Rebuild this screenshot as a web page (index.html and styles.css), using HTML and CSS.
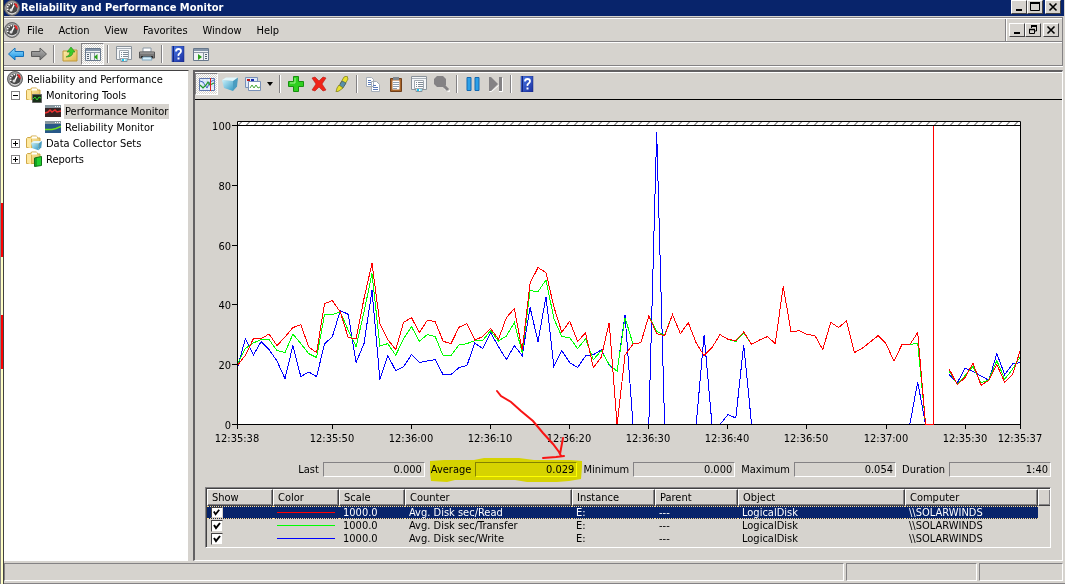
FILE: index.html
```
<!DOCTYPE html>
<html lang="en">
<head>
    <meta charset="UTF-8">
    <meta name="viewport" content="width=device-width, initial-scale=1.0">
    <title>Reliability and Performance Monitor</title>
    <link rel="stylesheet" href="styles.css">
    <script src="chart.js" defer></script>
</head>
<body>
    <!-- shared icons -->
    <svg class="defs" aria-hidden="true">
        <defs>
            <linearGradient id="gBlue" x1="0" y1="0" x2="1" y2="1"><stop offset="0" stop-color="#4a7be8"/><stop offset="1" stop-color="#1c2fa0"/></linearGradient>
            <linearGradient id="gArrow" x1="0" y1="0" x2="0" y2="1"><stop offset="0" stop-color="#9be0ff"/><stop offset="1" stop-color="#0c8be0"/></linearGradient>
            <linearGradient id="gGray" x1="0" y1="0" x2="0" y2="1"><stop offset="0" stop-color="#b4b4b4"/><stop offset="1" stop-color="#707070"/></linearGradient>
            <linearGradient id="gFolder" x1="0" y1="0" x2="1" y2="1"><stop offset="0" stop-color="#fff0b0"/><stop offset="1" stop-color="#e0b850"/></linearGradient>
            <linearGradient id="gCube" x1="0" y1="0" x2="1" y2="1"><stop offset="0" stop-color="#c8f0fa"/><stop offset="1" stop-color="#3a9cc4"/></linearGradient>
            <pattern id="hatch" x="237" y="121" width="8" height="4" patternUnits="userSpaceOnUse"><path d="M1 4.5L6 -.5" stroke="#404040"/></pattern>
        </defs>
        <symbol id="gauge" viewBox="0 0 16 16">
            <circle cx="8" cy="8" r="7.5" fill="#8c8c8c" stroke="#666"/>
            <circle cx="8" cy="8" r="6" fill="#484848" stroke="#c4c4c4" stroke-width=".8"/>
            <path d="M4 10a4.500 4.500 0 0 1 6-6" fill="none" stroke="#fff" stroke-width="1.500" stroke-dasharray="1.500 1"/>
            <path d="M10 3l3 1 1 4-2-1z" fill="#f02020"/>
            <path d="M7 11L10 5" stroke="#fff" stroke-width="1.500"/>
            <circle cx="7" cy="10" r="1.500" fill="#ddd"/>
            <path d="M4 12.500q4 3 8 0" fill="none" stroke="#ddd"/>
        </symbol>
        <symbol id="help" viewBox="0 0 16 16">
            <path d="M2 0h12v16H2z" fill="url(#gBlue)" stroke="#182878" stroke-width=".5"/>
            <path d="M3.500 0v16" stroke="#16257c"/>
            <path d="M6 5.500Q6 3 8.500 3T11 5.300Q11 6.500 9.500 7.500T8.500 10" fill="none" stroke="#fff" stroke-width="1.800"/>
            <path d="M7.500 11.500h2v2h-2z" fill="#fff"/>
        </symbol>
        <symbol id="props" viewBox="0 0 16 16">
            <path d="M.5.5h15v13H11v2H5v-2H.5z" fill="#f4f6f8" stroke="#8a929a"/>
            <path d="M1 2.500h14" stroke="#a8b0b8"/>
            <path d="M3.500 4.500h9v8h-9z" fill="#fff" stroke="#a0a8b0"/>
            <path d="M5 6.500h1M5 8.500h1M5 10.500h1M7 6.500h5M7 8.500h5M7 10.500h5" stroke="#7f8a95"/>
            <path d="M6 14h2" stroke="#18c8f0" stroke-width="2"/><path d="M9 14h2" stroke="#50d8f8"/>
        </symbol>
        <symbol id="folder" viewBox="0 0 16 16">
            <path d="M.5 3.500l1-1h3l1-1.500h5l1 2h2.500v9.500H.5z" fill="url(#gFolder)" stroke="#d0a848"/>
            <path d="M6 1.500h5v2H6z" fill="#fff"/>
            <path d="M1 4h4.500v9.500L1 12z" fill="#ffe9a0"/>
            <path d="M5.500 4v9" stroke="#dcb450"/>
        </symbol>
        <symbol id="cube" viewBox="0 0 16 16">
            <path d="M0 4l4-2.500h12L12 5z" fill="#e0f6fc"/>
            <path d="M0 4l11 1v10L2 12z" fill="url(#gCube)"/>
            <path d="M11 5l5-3.500-1 9-4 4.500z" fill="#4a9cc0"/>
        </symbol>
    </svg>

    <div class="backdrop"></div>
    <div class="window">
        <header class="title-bar">
            <svg class="icon"><use href="#gauge"/></svg>
            <h1>Reliability and Performance Monitor</h1>
            <div class="win-buttons">
                <button class="win-button" aria-label="Minimize"><svg viewBox="0 0 12 10"><path d="M3 8h6" stroke="#000" stroke-width="2"/></svg></button>
                <button class="win-button" aria-label="Maximize"><svg viewBox="0 0 12 10"><path d="M1.500 1v7.500h9V1M1 1h10" fill="none" stroke="#000"/><path d="M1 1h10" stroke="#000" stroke-width="2"/></svg></button>
                <button class="win-button close" aria-label="Close"><svg viewBox="0 0 12 10"><path d="M2.500 1.500l7 7M9.500 1.500l-7 7" stroke="#000" stroke-width="1.600"/></svg></button>
            </div>
        </header>

        <div class="bars">
            <nav class="menu-bar">
                <svg class="icon"><use href="#gauge"/></svg>
                <button class="menu">File</button>
                <button class="menu">Action</button>
                <button class="menu">View</button>
                <button class="menu">Favorites</button>
                <button class="menu">Window</button>
                <button class="menu">Help</button>
                <div class="win-buttons child">
                    <button class="win-button" aria-label="Minimize child"><svg viewBox="0 0 12 10"><path d="M3 8h6" stroke="#000" stroke-width="2"/></svg></button>
                    <button class="win-button" aria-label="Restore child"><svg viewBox="0 0 12 10"><path d="M4.500 3V1h5v5H8" fill="none" stroke="#000"/><path d="M4 1h6" stroke="#000" stroke-width="2"/><path d="M2.500 4.500h5v4h-5z" fill="none" stroke="#000"/><path d="M2 4.500h6" stroke="#000" stroke-width="1.500"/></svg></button>
                    <button class="win-button close" aria-label="Close child"><svg viewBox="0 0 12 10"><path d="M2.500 1.500l7 7M9.500 1.500l-7 7" stroke="#000" stroke-width="1.600"/></svg></button>
                </div>
            </nav>
            <div class="toolbar">
                <button class="tool" aria-label="Back"><svg class="icon" viewBox="0 0 16 16"><path d="M.5 8L7 2v3.500h8.500v5H7V14z" fill="url(#gArrow)" stroke="#1470b8"/></svg></button>
                <button class="tool" aria-label="Forward"><svg class="icon" viewBox="0 0 16 16"><path d="M15.500 8L9 2v3.500H.5v5H9V14z" fill="url(#gGray)" stroke="#5c5c5c"/></svg></button>
                <span class="sep"></span>
                <button class="tool" aria-label="Up one level"><svg class="icon" viewBox="0 0 16 16"><path d="M1 5h6l1-1h7v11H1z" fill="url(#gFolder)" stroke="#c09838"/><path d="M4 11q4-1 4-5H5l4-5 4 5h-2q0 5-7 5z" fill="#3ccc28" stroke="#208818" stroke-width=".6"/></svg></button>
                <button class="tool pressed" aria-label="Show console tree"><svg class="icon" viewBox="0 0 16 16"><path d="M.5 2.500h15v12H.5z" fill="#f0f2f5" stroke="#68788c"/><path d="M1 4h14" stroke="#8494a8" stroke-width="2"/><path d="M5.500 7v7M1 6.500h14M9.500 7v7" stroke="#8a96a4"/><path d="M2 8.500h2M2 10.500h2M2 12.500h2" stroke="#506070"/><path d="M12.500 8v6L9 11z" fill="#28a018"/></svg></button>
                <span class="sep"></span>
                <button class="tool" aria-label="Properties"><svg class="icon"><use href="#props"/></svg></button>
                <button class="tool" aria-label="Print"><svg class="icon" viewBox="0 0 16 16"><path d="M4 2h8v4H4z" fill="#fff" stroke="#8b98a5"/><path d="M.5 6h15v6H.5z" fill="#787878" stroke="#555"/><path d="M1 7h14" stroke="#aaa"/><path d="M2 11h12" stroke="#303030" stroke-width="2"/><path d="M4 11h8l1 3H3z" fill="#d8f0fb" stroke="#80a8c0"/></svg></button>
                <span class="sep"></span>
                <button class="tool" aria-label="Help"><svg class="icon"><use href="#help"/></svg></button>
                <button class="tool" aria-label="Show action pane"><svg class="icon" viewBox="0 0 16 16"><path d="M.5 2.500h15v12H.5z" fill="#f0f2f5" stroke="#68788c"/><path d="M1 4h14" stroke="#8494a8" stroke-width="2"/><path d="M10.500 7v7M1 6.500h14" stroke="#8a96a4"/><path d="M12 8.500h2M12 10.500h2M12 12.500h2" stroke="#506070"/><path d="M5 8v6l4-3z" fill="#28a018"/></svg></button>
            </div>
        </div>

        <main class="content">
            <ul class="tree">
                <li class="node root"><svg class="icon"><use href="#gauge"/></svg><a href="#">Reliability and Performance</a></li>
                <li class="node"><button class="expander" aria-label="Collapse"><svg viewBox="0 0 7 7"><path d="M1 3.500h5" stroke="#000"/></svg></button>
                    <svg class="icon" viewBox="0 0 16 16"><use href="#folder"/><path d="M6.500 7.500h9v8h-9z" fill="#183018" stroke="#666"/><path d="M7 12l2-2 2 3 2-3 2 1" fill="none" stroke="#30d830"/></svg>
                    <a href="#">Monitoring Tools</a></li>
                <li class="node leaf"><svg class="icon" viewBox="0 0 16 16"><path d="M0 2h16v12H0z" fill="#382424"/><path d="M0 2h16v3H0z" fill="#8898a0"/><path d="M10 3.500h1M12 3.500h1M14 3.500h1" stroke="#fff"/><path d="M0 10l3-1 2-2 2 2 3-2 2 2 4-1" fill="none" stroke="#f03030" stroke-width="1.500"/></svg>
                    <a href="#" class="selected">Performance Monitor</a></li>
                <li class="node leaf"><svg class="icon" viewBox="0 0 16 16"><path d="M0 2h16v12H0z" fill="#285888"/><path d="M0 2h16v3H0z" fill="#8898a0"/><path d="M10 3.500h1M12 3.500h1M14 3.500h1" stroke="#fff"/><path d="M0 10.500h7l4-1 5-2" fill="none" stroke="#70e020" stroke-width="1.600"/></svg>
                    <a href="#">Reliability Monitor</a></li>
                <li class="node"><button class="expander" aria-label="Expand"><svg viewBox="0 0 7 7"><path d="M1 3.500h5M3.500 1v5" stroke="#000"/></svg></button>
                    <svg class="icon" viewBox="0 0 16 16"><use href="#folder"/><use href="#cube" x="5" y="5" width="11" height="11"/></svg>
                    <a href="#">Data Collector Sets</a></li>
                <li class="node"><button class="expander" aria-label="Expand"><svg viewBox="0 0 7 7"><path d="M1 3.500h5M3.500 1v5" stroke="#000"/></svg></button>
                    <svg class="icon" viewBox="0 0 16 16"><use href="#folder"/><path d="M8.500 7l7-1.500v9l-7 1z" fill="#20d030" stroke="#107018"/><path d="M10 7v8" stroke="#107018"/></svg>
                    <a href="#">Reports</a></li>
            </ul>

            <section class="monitor">
                <div class="toolbar monitor-tools">
                    <button class="tool pressed" aria-label="View current activity"><svg class="icon" viewBox="0 0 16 16"><path d="M.5 2.500h15v12H.5z" fill="#e4f0fc" stroke="#6078b0"/><path d="M1 6h14M1 10h14M4 3v11M8 3v11" stroke="#c8daf0"/><path d="M1 5l3 1 4 6 3-6 4-2" fill="none" stroke="#4068c0"/><path d="M1 9l3 3 3-3 2-3 2 3 4-2" fill="none" stroke="#209828" stroke-width="1.200"/><path d="M11.500 2v13" stroke="#e02020"/></svg></button>
                    <button class="tool" aria-label="View log data"><svg class="icon"><use href="#cube"/></svg></button>
                    <button class="tool" aria-label="Change graph type"><svg class="icon" viewBox="0 0 16 16"><path d="M.5 1.500h12v10H.5z" fill="#dce8f8" stroke="#7890b8"/><path d="M2 4h3" stroke="#c01818" stroke-width="2"/><path d="M6 4h3" stroke="#1828b0" stroke-width="2"/><path d="M3.500 5.500h12v9h-12z" fill="#fff" stroke="#7890b8"/><path d="M5 12l2-3 2 3 2-3 2 3 2-1" fill="none" stroke="#48a838"/></svg></button>
                    <button class="tool drop" aria-label="Graph type list"><svg viewBox="0 0 6 4"><path d="M0 0h6L3 4z"/></svg></button>
                    <span class="sep"></span>
                    <button class="tool" aria-label="Add"><svg class="icon" viewBox="0 0 16 16"><path d="M5.500.5h5v5h5v5h-5v5h-5v-5h-5v-5h5z" fill="#30d020" stroke="#189010"/><path d="M7 2v5H2" fill="none" stroke="#a0f890"/></svg></button>
                    <button class="tool" aria-label="Delete"><svg class="icon" viewBox="0 0 16 16"><path d="M1 2l3-1 4 4 4-4 3 1-4 6 4 6-3 1-4-4-4 4-3-1 4-6z" fill="#f02418" stroke="#b81810" stroke-width=".6"/></svg></button>
                    <button class="tool" aria-label="Highlight"><svg class="icon" viewBox="0 0 16 16"><path d="M10 1l3-1 1 3-4 7-4-2z" fill="#e8e030" stroke="#78780c" stroke-width=".7"/><path d="M8 5l4 2-3 5-4-2z" fill="#5890a8" stroke="#405860" stroke-width=".7"/><path d="M5 9l4 3-4 3-3 1 1-4z" fill="#e8e030" stroke="#78780c" stroke-width=".7"/></svg></button>
                    <span class="sep"></span>
                    <button class="tool" aria-label="Copy Properties"><svg class="icon" viewBox="0 0 16 16"><path d="M1.500 1.500h5l2 2v7h-7zM6.500 5.500h5l3 3v7h-8z" fill="#fff" stroke="#a4adb8"/><path d="M3 4.500h3M3 6.500h3M3 8.500h3M8 9.500h3M8 11.500h5M8 13.500h5" stroke="#5878b8"/></svg></button>
                    <button class="tool" aria-label="Paste Counter List"><svg class="icon" viewBox="0 0 16 16"><path d="M2.500 2.500h11v13h-11z" fill="#a86428" stroke="#70401c"/><path d="M4.500 4.500h7v9h-7z" fill="#fff"/><path d="M5 1h6v3H5z" fill="#808890"/><path d="M5 6.500h6M5 8.500h6M5 10.500h6M5 12.500h4" stroke="#90a0b0"/></svg></button>
                    <button class="tool" aria-label="Chart properties"><svg class="icon"><use href="#props"/></svg></button>
                    <button class="tool" aria-label="Zoom" disabled><svg class="icon" viewBox="0 0 16 16"><path d="M10 12.500l5 3.500 1-2" fill="none" stroke="#fff"/><path d="M3 0h6l3 3v6l-2 2H3L0 8V3z" fill="#848284"/><path d="M9 9l5 5" stroke="#848284" stroke-width="3"/></svg></button>
                    <span class="sep"></span>
                    <button class="tool" aria-label="Freeze display"><svg class="icon" viewBox="0 0 16 16"><path d="M2 1.500h4v13H2zM10 1.500h4v13h-4z" fill="#2ca0e8" stroke="#1468b0"/></svg></button>
                    <button class="tool" aria-label="Update data" disabled><svg class="icon" viewBox="0 0 16 16"><path d="M1.500 15.500h2l7-6M11 15.500h3.500V2" fill="none" stroke="#fff"/><path d="M1 1h2l7 7-7 7H1z" fill="#848284"/><path d="M11 1h3v14h-3z" fill="#848284"/></svg></button>
                    <span class="sep"></span>
                    <button class="tool" aria-label="Chart help"><svg class="icon"><use href="#help"/></svg></button>
                </div>

                <!-- chart: the value axis runs 0 to 100, the time axis 100 seconds -->
                <svg class="chart" viewBox="195 100 867 357" role="img" aria-label="Performance chart">
                    <path d="M237 121h784v304H237z" fill="#fff"/>
                    <path d="M237 121h784v4H237z" fill="url(#hatch)"/>
                    <g id="series"></g>
                    <path class="time-bar" d="M933.500 126v299"/>
                    <path class="axis" d="M237.500 429V121.500h783V429M232 125.500h789M232 185.500h5M232 245.500h5M232 304.500h5M232 364.500h5M232 424.500h693M934 424.500h87M332.500 425v4M411.500 425v4M490.500 425v4M569.500 425v4M648.500 425v4M727.500 425v4M806.500 425v4M886.500 425v4M965.500 425v4"/>
                    <path class="time-bar" d="M925 424.500h9"/>
                    <g class="y-labels">
                        <text x="231" y="130">100</text>
                        <text x="231" y="190">80</text>
                        <text x="231" y="250">60</text>
                        <text x="231" y="309">40</text>
                        <text x="231" y="369">20</text>
                        <text x="231" y="429">0</text>
                    </g>
                    <g class="x-labels">
                        <text x="237" y="442">12:35:38</text>
                        <text x="332" y="442">12:35:50</text>
                        <text x="411" y="442">12:36:00</text>
                        <text x="490" y="442">12:36:10</text>
                        <text x="569" y="442">12:36:20</text>
                        <text x="648" y="442">12:36:30</text>
                        <text x="727" y="442">12:36:40</text>
                        <text x="806" y="442">12:36:50</text>
                        <text x="886" y="442">12:37:00</text>
                        <text x="965" y="442">12:35:30</text>
                        <text x="1020" y="442">12:35:37</text>
                    </g>
                </svg>

                <div class="stats">
                    <label for="last">Last</label><input id="last" value="0.000" readonly>
                    <label for="average">Average</label><input id="average" value="0.029" readonly>
                    <label for="minimum">Minimum</label><input id="minimum" value="0.000" readonly>
                    <label for="maximum">Maximum</label><input id="maximum" value="0.054" readonly>
                    <label for="duration">Duration</label><input id="duration" value="1:40" readonly>
                </div>

                <div class="legend">
                    <table>
                        <colgroup>
                            <col class="c-narrow"><col class="c-narrow"><col class="c-narrow"><col class="c-wide"><col class="c-mid"><col class="c-mid"><col class="c-wide"><col class="c-computer"><col>
                        </colgroup>
                        <thead>
                            <tr><th>Show</th><th>Color</th><th>Scale</th><th>Counter</th><th>Instance</th><th>Parent</th><th>Object</th><th>Computer</th><th class="rest"></th></tr>
                        </thead>
                        <tbody>
                            <tr class="current"><td><input type="checkbox" aria-label="Show Read" checked></td><td><span class="swatch read"></span></td><td>1000.0</td><td>Avg. Disk sec/Read</td><td>E:</td><td>---</td><td>LogicalDisk</td><td>\\SOLARWINDS</td><td class="rest"></td></tr>
                            <tr><td><input type="checkbox" aria-label="Show Transfer" checked></td><td><span class="swatch transfer"></span></td><td>1000.0</td><td>Avg. Disk sec/Transfer</td><td>E:</td><td>---</td><td>LogicalDisk</td><td>\\SOLARWINDS</td><td class="rest"></td></tr>
                            <tr><td><input type="checkbox" aria-label="Show Write" checked></td><td><span class="swatch write"></span></td><td>1000.0</td><td>Avg. Disk sec/Write</td><td>E:</td><td>---</td><td>LogicalDisk</td><td>\\SOLARWINDS</td><td class="rest"></td></tr>
                        </tbody>
                    </table>
                </div>

                <!-- marker and red pen over the average -->
                <svg class="markup marker" viewBox="195 72 867 488" aria-hidden="true">
                    <path d="M430 461l14-1 30 0 10-2h35l15 2 36 0 12 1v6l-1 12-12 2-12 1h-30l-12-2h-30l-30 0-8 2-16-1-1-8z"/>
                </svg>
                <svg class="markup pen" viewBox="195 72 867 488" aria-hidden="true">
                    <path d="M497 391l4 5 10 6 10 9 12 10 10 12 10 11 6 8 2 4M563 438l-3 16M543 458l13-1 8-1"/>
                </svg>
            </section>
        </main>

        <footer class="status-bar"><span></span><span></span><span></span></footer>
    </div>
</body>
</html>
```
FILE: styles.css
```
* {
    box-sizing: border-box;
}
body {
    display: flex;
    min-height: 100vh;
    margin: 0;
    background-color: #d6d3ce;
    color: #000;
    font: 11px/13px "DejaVu Sans Condensed", "DejaVu Sans", Tahoma, sans-serif;
}
button, input {
    font: inherit;
    color: inherit;
    margin: 0;
    padding: 0;
    border: none;
    border-radius: 0;
    background: none;
}
svg {
    display: block;
    flex: none;
}
.defs {
    position: absolute;
    width: 0;
    height: 0;
}
.icon {
    width: 16px;
    height: 16px;
}

/* strip of the window behind */
.backdrop {
    width: 4px;
    border-left: 1px solid #848284;
    border-right: 1px solid #424142;
    background: linear-gradient(#ffffc6 203px, #f00 203px 257px, #ffffc6 257px 315px, #f00 315px 369px, #ffffc6 369px);
}
.window {
    flex: 1;
    min-width: 0;
    display: flex;
    flex-direction: column;
    padding-right: 2px;
    border-bottom: 1px solid #848284;
}

/* title bar */
.title-bar {
    display: flex;
    align-items: center;
    height: 16px;
    padding-right: 3px;
    margin-right: -1px;
    background-color: #08246b;
    color: #fff;
}
.title-bar h1 {
    flex: 1;
    margin: 0 0 2px 1px;
    font-size: 11px;
}
.win-buttons {
    display: flex;
}
.win-button {
    width: 16px;
    height: 14px;
    padding: 1px;
    background-color: #d6d3ce;
    border: 1px solid;
    border-color: #fff #424142 #424142 #fff;
}
.win-button svg {
    width: 12px;
    height: 10px;
}
.win-button.close {
    margin-left: 2px;
}
.title-bar .win-buttons {
    align-self: flex-start;
}

/* menu and toolbar */
.bars {
    margin-top: 1px;
    border-top: 1px solid #848284;
    border-right: 1px solid #848284;
    border-bottom: 1px solid #848284;
    box-shadow: 0 1px #fff;
}
.menu-bar {
    display: flex;
    align-items: center;
    height: 24px;
    border-top: 1px solid #fff;
    border-bottom: 1px solid #848284;
}
.menu {
    height: 20px;
    margin-left: 3px;
    padding: 0 4px;
}
.menu + .menu {
    margin-left: 7px;
}
.win-buttons.child {
    align-self: stretch;
    align-items: center;
    margin-left: auto;
    padding: 0 3px;
    border-left: 1px solid #848284;
    box-shadow: inset 1px 0 #fff;
}
.toolbar {
    display: flex;
    align-items: center;
    height: 23px;
    border-top: 1px solid #fff;
}
.tool {
    display: flex;
    align-items: center;
    justify-content: center;
    width: 23px;
    height: 22px;
}
.tool.pressed {
    border: 1px solid;
    border-color: #848284 #fff #fff #848284;
    background: repeating-conic-gradient(#fff 0 25%, #d6d3ce 0 50%) 0 0 / 2px 2px;
}
.tool.drop {
    width: 12px;
}
.tool.drop svg {
    width: 6px;
    height: 4px;
}
.sep {
    width: 2px;
    height: 18px;
    margin: 0 3px;
    border-left: 1px solid #848284;
    border-right: 1px solid #fff;
}

/* console tree */
.content {
    flex: 1;
    display: flex;
    gap: 4px;
    margin-top: 4px;
}
.tree {
    width: 185px;
    flex: none;
    margin: 0;
    padding: 0 0 0 3px;
    list-style: none;
    background-color: #fff;
    border-top: 1px solid #424142;
    border-right: 1px solid #d6d3ce;
}
.node {
    display: flex;
    align-items: center;
    height: 16px;
    padding-left: 4px;
}
.node.root {
    padding-left: 0;
}
.node.leaf {
    padding-left: 38px;
}
.node a {
    height: 15px;
    margin-left: 3px;
    padding: 1px;
    color: inherit;
    text-decoration: none;
    white-space: nowrap;
}
.node a.selected {
    background-color: #d6d3ce;
}
.expander {
    width: 9px;
    height: 9px;
    margin-right: 6px;
    border: 1px solid #848284;
}
.expander svg {
    width: 7px;
    height: 7px;
}

/* monitor pane */
.monitor {
    position: relative;
    flex: 1;
    min-width: 0;
    border: 1px solid #fff;
    border-top: 2px solid #636163;
    border-left: 2px solid #636163;
}
.monitor-tools {
    height: 28px;
    padding-bottom: 4px;
    border-bottom: 1px solid #000;
}
.chart {
    width: 100%;
    height: auto;
}
.chart text {
    font-size: 11px;
}
.y-labels {
    text-anchor: end;
}
.x-labels {
    text-anchor: middle;
}
.axis {
    fill: none;
    stroke: #000;
}
.time-bar {
    stroke: #f00;
}
.series {
    fill: none;
    shape-rendering: crispEdges;
}
.read {
    stroke: #f00;
    background-color: #f00;
}
.transfer {
    stroke: #0f0;
    background-color: #0f0;
}
.write {
    stroke: #00f;
    background-color: #00f;
}

.stats {
    display: flex;
    justify-content: flex-end;
    align-items: center;
    margin: 5px 11px 10px;
}
.stats input {
    width: 102px;
    height: 15px;
    margin: 0 6px 0 4px;
    padding-right: 2px;
    border: 1px solid;
    border-color: #848284 #fff #fff #848284;
    text-align: right;
}
.stats input:last-child {
    margin-right: 0;
}

/* counter legend */
.legend {
    margin: 0 11px 11px 10px;
    padding-bottom: 2px;
    border: 1px solid;
    border-color: #848284 #fff #fff #848284;
    box-shadow: inset 1px 1px #424142;
}
table {
    width: 100%;
    padding: 1px 0 0 1px;
    table-layout: fixed;
    border-spacing: 0;
}
.c-narrow {
    width: 66px;
}
.c-wide {
    width: 167px;
}
.c-mid {
    width: 83px;
}
.c-computer {
    width: 133px;
}
th {
    height: 17px;
    padding: 0 0 0 4px;
    border: 1px solid;
    border-color: #fff #424142 #424142 #fff;
    box-shadow: inset -1px -1px #848284;
    font-weight: normal;
    text-align: left;
}
th.rest {
    border-right: none;
}
td {
    height: 13px;
    padding: 0 0 0 4px;
    line-height: 11px;
    white-space: nowrap;
}
.current td:not(.rest) {
    background-color: #08246b;
    color: #fff;
    border-top: 1px dotted #ffdf94;
    border-bottom: 1px dotted #ffdf94;
}
td input {
    appearance: none;
    display: block;
    width: 12px;
    height: 12px;
    background: #fff url("data:image/svg+xml,%3Csvg xmlns='http://www.w3.org/2000/svg' viewBox='0 0 10 10'%3E%3Cpath d='M2 4l2 3 4-5' fill='none' stroke='%23000' stroke-width='2'/%3E%3C/svg%3E");
    border: 1px solid;
    border-color: #424142 #d6d3ce #d6d3ce #424142;
}
.current td input {
    height: 11px;
}
.swatch {
    display: block;
    width: 58px;
    height: 1px;
}

.markup {
    position: absolute;
    top: 0;
    left: 0;
    width: 100%;
    pointer-events: none;
}
.marker {
    fill: #ff0;
    mix-blend-mode: multiply;
}
.pen {
    fill: none;
    stroke: #f81414;
    stroke-width: 2;
    stroke-linecap: round;
}

/* status bar */
.status-bar {
    display: grid;
    grid-template-columns: 1fr 131px 84px;
    gap: 2px;
    height: 18px;
    margin: 2px 0;
}
.status-bar span {
    border: 1px solid;
    border-color: #848284 #fff #fff #848284;
}
```
FILE: chart.js
```
// Samples, one per second. Each number is the depth below the 61.6 mark,
// in thirds of a chart unit; 553 is the zero line.
const ZERO = 553;
const gap = [null, null];

const readTail = [297, 343, 322, 278, 345, 330, 283, 336, 313, 238];
const transferTail = [304, 341, 316, 288, 338, 328, 271, 327, 296, 258];
const writeTail = [313, 338, 294, 303, 317, 330, 250, 313, 281, 277];

const read = [
    375, 345, 296, 295, 281, 316, 290, 262, 253, 320, 337, 190, 181, 215, 292, 295, 175, 69, 250, 298,
    328, 246, 232, 277, 240, 244, 303, 310, 261, 250, 299, 289, 265, 297, 232, 205, 330, 128, 82, 97,
    200, 276, 243, 303, 278, 382, 350, 247, 553, 345, 311, 307, 227, 280, 286, 223, 280, 247, 308, 346,
    322, 283, 297, 301, 275, 312, 299, 289, 310, 138, 275, 271, 282, 286, 328, 246, 262, 242, 337, 324,
    305, 286, 310, 363, 313, 313, 277, 553
];
const transfer = [
    372, 325, 308, 298, 298, 331, 337, 281, 310, 340, 352, 223, 223, 215, 270, 319, 215, 100, 317, 310,
    345, 295, 259, 303, 283, 289, 346, 346, 314, 310, 301, 301, 271, 302, 287, 247, 337, 151, 154, 119,
    235, 289, 292, 325, 296, 358, 331, 373, 393, 232, 311, 307, 227, 274, 284, 223, 280, 247, 308, 346,
    322, 283, 297, 304, 277, 312, 299, 289, 310, 138, 275, 271, 282, 286, 328, 246, 262, 242, 337, 324,
    305, 286, 310, 363, 313, 313, 308, 553
];
const write = [
    382, 295, 344, 304, 328, 362, 415, 316, 409, 395, 409, 311, 289, 211, 222, 367, 310, 150, 418, 346,
    391, 379, 343, 367, 362, 358, 403, 403, 382, 376, 308, 325, 277, 319, 358, 316, 346, 202, 304, 169,
    379, 331, 367, 382, 347, 343, 329, 375, 393, 223, ZERO, ZERO, ZERO, -324, ZERO, ZERO, ZERO, ZERO, ZERO, 283,
    ZERO, ZERO, 523, 533, 313, ZERO
].concat(Array(20).fill(ZERO), [425, ZERO]);

function drawSeries(name, head, tail) {
    const samples = head.concat(gap, tail.map(v => v + 90));
    const step = 783 / 99;
    let d = '';
    let pen = 'M';
    samples.forEach((v, i) => {
        if (v === null) {
            pen = 'M';
            return;
        }
        d += `${pen}${(237.5 + i * step).toFixed(1)} ${(240.3 + v / 3).toFixed(1)}`;
        pen = 'L';
    });
    const path = document.createElementNS('http://www.w3.org/2000/svg', 'path');
    path.setAttribute('class', `series ${name}`);
    path.setAttribute('d', d);
    document.getElementById('series').append(path);
}

drawSeries('write', write, writeTail);
drawSeries('transfer', transfer, transferTail);
drawSeries('read', read, readTail);
```
